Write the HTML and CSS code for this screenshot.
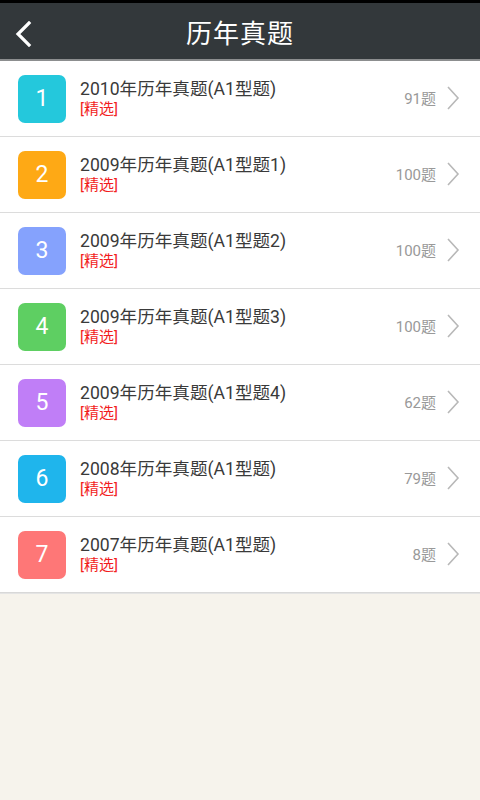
FILE: index.html
```html
<!DOCTYPE html>
<html>
<head>
  <meta charset="utf-8">
  <title>历年真题</title>
  <link rel="stylesheet" href="styles.css">
</head>
<body>
  <div class="statusbar"></div>
  <div class="header">
    <svg class="back" width="20" height="26" viewBox="0 0 20 26">
      <path d="M15 2 L4 13 L15 24" fill="none" stroke="#fff" stroke-width="3.2" stroke-linecap="square"/>
    </svg>
    <h1>历年真题</h1>
  </div>

  <ul class="list">
    <li class="item">
      <span class="badge c1">1</span>
      <div class="info">
        <p class="title">2010年历年真题(A1型题)</p>
        <p class="tag">[精选]</p>
      </div>
      <span class="count">91题</span>
      <svg class="arrow" width="14" height="24" viewBox="0 0 14 24"><path d="M2 1 L12 12 L2 23" fill="none" stroke="#b8b8b8" stroke-width="1.6"/></svg>
    </li>
    <li class="item">
      <span class="badge c2">2</span>
      <div class="info">
        <p class="title">2009年历年真题(A1型题1)</p>
        <p class="tag">[精选]</p>
      </div>
      <span class="count">100题</span>
      <svg class="arrow" width="14" height="24" viewBox="0 0 14 24"><path d="M2 1 L12 12 L2 23" fill="none" stroke="#b8b8b8" stroke-width="1.6"/></svg>
    </li>
    <li class="item">
      <span class="badge c3">3</span>
      <div class="info">
        <p class="title">2009年历年真题(A1型题2)</p>
        <p class="tag">[精选]</p>
      </div>
      <span class="count">100题</span>
      <svg class="arrow" width="14" height="24" viewBox="0 0 14 24"><path d="M2 1 L12 12 L2 23" fill="none" stroke="#b8b8b8" stroke-width="1.6"/></svg>
    </li>
    <li class="item">
      <span class="badge c4">4</span>
      <div class="info">
        <p class="title">2009年历年真题(A1型题3)</p>
        <p class="tag">[精选]</p>
      </div>
      <span class="count">100题</span>
      <svg class="arrow" width="14" height="24" viewBox="0 0 14 24"><path d="M2 1 L12 12 L2 23" fill="none" stroke="#b8b8b8" stroke-width="1.6"/></svg>
    </li>
    <li class="item">
      <span class="badge c5">5</span>
      <div class="info">
        <p class="title">2009年历年真题(A1型题4)</p>
        <p class="tag">[精选]</p>
      </div>
      <span class="count">62题</span>
      <svg class="arrow" width="14" height="24" viewBox="0 0 14 24"><path d="M2 1 L12 12 L2 23" fill="none" stroke="#b8b8b8" stroke-width="1.6"/></svg>
    </li>
    <li class="item">
      <span class="badge c6">6</span>
      <div class="info">
        <p class="title">2008年历年真题(A1型题)</p>
        <p class="tag">[精选]</p>
      </div>
      <span class="count">79题</span>
      <svg class="arrow" width="14" height="24" viewBox="0 0 14 24"><path d="M2 1 L12 12 L2 23" fill="none" stroke="#b8b8b8" stroke-width="1.6"/></svg>
    </li>
    <li class="item">
      <span class="badge c7">7</span>
      <div class="info">
        <p class="title">2007年历年真题(A1型题)</p>
        <p class="tag">[精选]</p>
      </div>
      <span class="count">8题</span>
      <svg class="arrow" width="14" height="24" viewBox="0 0 14 24"><path d="M2 1 L12 12 L2 23" fill="none" stroke="#b8b8b8" stroke-width="1.6"/></svg>
    </li>
  </ul>
</body>
</html>
```

FILE: styles.css
```css
html {
  height: 100%;
}
body {
  margin: 0;
  min-height: 100%;
  background-color: #f6f3ec;
  font-family: Roboto, "Noto Sans CJK SC", sans-serif;
}

.statusbar {
  height: 3px;
  background-color: #000;
}

.header {
  height: 56px;
  background-color: #33383b;
  border-bottom: 2px solid #8c8e8f;
  display: flex;
  align-items: center;
  justify-content: center;
  position: relative;
}

.header h1 {
  margin: 0;
  color: #fff;
  font-size: 26px;
  font-weight: normal;
  letter-spacing: 1px;
}

.back {
  position: absolute;
  left: 14px;
  top: 18px;
}

.list {
  list-style: none;
  margin: 0;
  padding: 0;
  background-color: #fff;
  border-bottom: 1px solid #e4e4e4;
}

.item {
  height: 75px;
  display: flex;
  align-items: center;
  padding: 0 20px 0 18px;
  border-bottom: 1px solid #dcdcdc;
}
.item:last-child {
  border-bottom: 1px solid #d8d8d8;
}

.badge {
  width: 48px;
  height: 48px;
  border-radius: 7px;
  color: #fff;
  font-size: 23px;
  display: flex;
  align-items: center;
  justify-content: center;
  flex-shrink: 0;
}
.c1 { background-color: #24c8dc; }
.c2 { background-color: #fea915; }
.c3 { background-color: #85a2fd; }
.c4 { background-color: #5ecf62; }
.c5 { background-color: #c07ef7; }
.c6 { background-color: #1fb5ec; }
.c7 { background-color: #fe7777; }

.info {
  flex: 1;
  margin-left: 14px;
  margin-top: -2px;
}

.title {
  margin: 0;
  font-size: 17.6px;
  line-height: 22px;
  color: #3a3a3a;
}

.tag {
  margin: 0;
  font-size: 15px;
  line-height: 18px;
  color: #f21d1d;
}

.count {
  font-size: 15px;
  color: #999;
  margin-right: 10px;
  margin-top: -3px;
}

.arrow {
  display: block;
  margin-top: -2px;
}
```
